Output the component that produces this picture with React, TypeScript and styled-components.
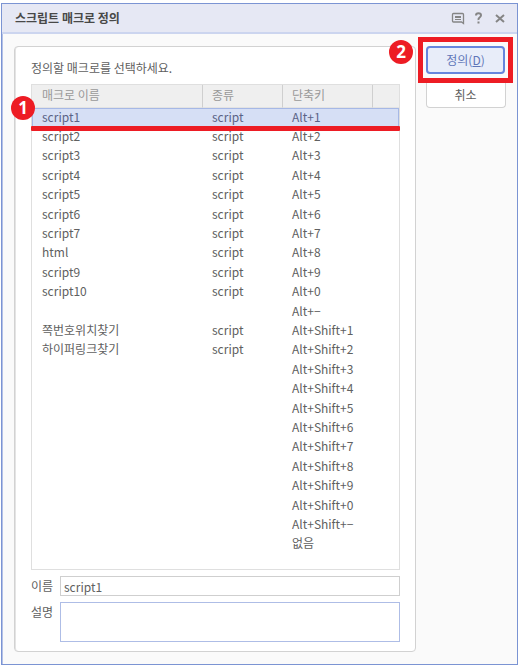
import React from 'react';
import styled, { createGlobalStyle, css } from 'styled-components';

const RED = '#ed1c24';

const GlobalStyle = createGlobalStyle`
  *, *::before, *::after { box-sizing: border-box; }
  body {
    margin: 0;
    background: #fff;
    color: #606060;
    font: 12px/18px "Noto Sans CJK KR", "Noto Sans", sans-serif;
  }
  button, input, textarea { font: inherit; color: inherit; }
`;

const Dialog = styled.main`
  margin: 3px 0 2px 1px;
  border: 1px solid #7b94d3;
  box-shadow: inset 1px 0 #b4c1e6;
  background: #fafafa;
`;

const TitleBar = styled.header`
  display: flex;
  align-items: center;
  justify-content: space-between;
  height: 30px;
  padding: 0 10px 0 13px;
  background: #e6e8f4;
  border-bottom: 2px solid #ccd5ef;
`;

const Title = styled.h1`
  margin: 0;
  color: #484848;
  font-size: 12px;
  line-height: 18px;
  font-weight: 700;
`;

const TitleActions = styled.div`
  display: flex;
  gap: 7px;
`;

const IconButton = styled.button`
  display: flex;
  width: 14px;
  height: 14px;
  padding: 0;
  border: 0;
  background: none;
  color: #858585;
`;

const Body = styled.div`
  display: flex;
  align-items: flex-start;
  gap: 2px;
  padding: 12px 4px 12px 12px;
`;

const Panel = styled.section`
  position: relative;
  flex: 1;
  min-width: 0;
  padding: 12px 15px 9px 16px;
  border: 1px solid #d2d2d2;
  border-radius: 4px;
  background: #fff;
  box-shadow: inset 1px 0 #e4e4e4;
`;

const Prompt = styled.p`
  margin: 0 0 7px;
`;

const ListBox = styled.div`
  position: relative;
  margin-bottom: 6px;
  padding-bottom: 15px;
  border: 1px solid #dfdfdf;
`;

const MacroTable = styled.table`
  width: 100%;
  height: 469px;
  table-layout: fixed;
  border-collapse: separate;
  border-spacing: 0;
`;

const Column = styled.col<{ $width?: number }>`
  ${({ $width }) => $width && css`width: ${$width}px;`}
`;

const HeadCell = styled.th`
  height: 23px;
  padding: 0 9px 2px;
  border-right: 1px solid #cfcfcf;
  border-bottom: 1px solid #e3e3e3;
  background: #efefef;
  color: #999;
  font-weight: 400;
  text-align: left;
  &:first-child { padding-left: 10px; }
  &:last-child { border-right: 0; }
`;

const Cell = styled.td`
  height: 19px;
  padding: 0 9px 2px;
  line-height: 16px;
  white-space: nowrap;
  &:first-child { padding-left: 10px; }
`;

const Row = styled.tr<{ $selected?: boolean }>`
  ${({ $selected }) => $selected && css`
    color: #5a6387;
    ${Cell} {
      background: #d6dff5;
      border-top: 1px solid #a6b8e6;
    }
    ${Cell}:first-child { border-left: 1px solid #a6b8e6; padding-left: 9px; }
    ${Cell}:last-child { border-right: 1px solid #a6b8e6; }
  `}
`;

const Underline = styled.div`
  position: absolute;
  top: 41px;
  left: -1px;
  right: -1px;
  height: 5px;
  border-radius: 1px;
  background: ${RED};
`;

const Badge = styled.span<{ $corner: 'list' | 'panel' }>`
  position: absolute;
  display: flex;
  align-items: center;
  justify-content: center;
  width: 24px;
  height: 24px;
  border-radius: 50%;
  background: ${RED};
  color: #fff;
  font: 700 17px/24px "Open Sans", "Noto Sans", sans-serif;
  ${({ $corner }) => $corner === 'list'
    ? css`top: 11px; left: -21px;`
    : css`top: -7px; right: 2px;`}
`;

const Field = styled.div`
  display: flex;
  align-items: flex-start;
  & + & { margin-top: 6px; }
`;

const Label = styled.label`
  flex: 0 0 29px;
  line-height: 20px;
`;

const TextInput = styled.input`
  flex: 1;
  min-width: 0;
  height: 20px;
  padding: 0 3px;
  border: 1px solid #cfcfcf;
  background: #fff;
`;

const TextArea = styled.textarea`
  flex: 1;
  min-width: 0;
  height: 40px;
  padding: 2px 3px;
  border: 1px solid #aebde6;
  background: #fff;
  resize: none;
  outline: 0;
`;

const Actions = styled.aside`
  display: flex;
  flex-direction: column;
  align-items: center;
  width: 95px;
  margin-top: -9px;
`;

const Highlight = styled.div`
  width: 100%;
  padding: 4px 3px;
  border: 5px solid ${RED};
`;

const ActionButton = styled.button<{ $primary?: boolean }>`
  display: block;
  width: 80px;
  height: 28px;
  padding: 0;
  border: 1px solid #d2d2d2;
  border-radius: 4px;
  background: #fff;
  ${({ $primary }) => $primary
    ? css`
      width: 100%;
      border: 2px solid #6685dc;
      background: #e8edf9;
      color: #6076b8;
    `
    : css`
      height: 25px;
      border-top: 0;
      border-radius: 0 0 4px 4px;
    `}
`;

const columns = ['매크로 이름', '종류', '단축키', ''];

const names = [
  'script1', 'script2', 'script3', 'script4', 'script5', 'script6',
  'script7', 'html', 'script9', 'script10', '', '쪽번호위치찾기', '하이퍼링크찾기',
];

const keys = ['1', '2', '3', '4', '5', '6', '7', '8', '9', '0', '−'];

const shortcuts = [
  ...keys.map((key) => `Alt+${key}`),
  ...keys.map((key) => `Alt+Shift+${key}`),
  '없음',
];

function CommentIcon() {
  return (
    <svg width="14" height="14" viewBox="0 0 14 14" fill="none" stroke="currentColor" aria-hidden="true">
      <path d="M2.5 2.5h9q1 0 1 1v9l-2-1.500h-8q-1 0-1-1v-6.500q0-1 1-1z" strokeWidth="1.300" />
      <path d="M4 5.500h6M4 6.500h6M4 8.500h6" />
    </svg>
  );
}

function HelpIcon() {
  return (
    <svg width="14" height="14" viewBox="0 0 14 14" fill="none" stroke="currentColor" strokeWidth="2" aria-hidden="true">
      <path d="M4 4.500q0-2.200 2.500-2.200t2.500 2q0 1.200-1.400 2.200T6.500 9" />
      <path d="M6.500 10.500v2" />
    </svg>
  );
}

function CloseIcon() {
  return (
    <svg width="14" height="14" viewBox="0 0 14 14" fill="none" stroke="currentColor" strokeWidth="2" aria-hidden="true">
      <path d="M3 4l8 7M11 4l-8 7" />
    </svg>
  );
}

export default function App() {
  return (
    <>
      <GlobalStyle />
      <Dialog>
        <TitleBar>
          <Title>스크립트 매크로 정의</Title>
          <TitleActions>
            <IconButton type="button" aria-label="의견"><CommentIcon /></IconButton>
            <IconButton type="button" aria-label="도움말"><HelpIcon /></IconButton>
            <IconButton type="button" aria-label="닫기"><CloseIcon /></IconButton>
          </TitleActions>
        </TitleBar>
        <Body>
          <Panel>
            <Prompt>정의할 매크로를 선택하세요.</Prompt>
            <ListBox>
              <MacroTable>
                <colgroup>
                  <Column />
                  <Column $width={80} />
                  <Column $width={90} />
                  <Column $width={26} />
                </colgroup>
                <thead>
                  <Row>
                    {columns.map((column) => <HeadCell key={column}>{column}</HeadCell>)}
                  </Row>
                </thead>
                <tbody>
                  {shortcuts.map((shortcut, index) => (
                    <Row key={shortcut} $selected={index === 0}>
                      <Cell>{names[index]}</Cell>
                      <Cell>{names[index] ? 'script' : ''}</Cell>
                      <Cell>{shortcut}</Cell>
                      <Cell />
                    </Row>
                  ))}
                </tbody>
              </MacroTable>
              <Underline />
              <Badge $corner="list">1</Badge>
            </ListBox>
            <Field>
              <Label htmlFor="macro-name">이름</Label>
              <TextInput id="macro-name" defaultValue="script1" />
            </Field>
            <Field>
              <Label htmlFor="macro-description">설명</Label>
              <TextArea id="macro-description" />
            </Field>
            <Badge $corner="panel">2</Badge>
          </Panel>
          <Actions>
            <Highlight>
              <ActionButton type="button" $primary>정의(<u>D</u>)</ActionButton>
            </Highlight>
            <ActionButton type="button">취소</ActionButton>
          </Actions>
        </Body>
      </Dialog>
    </>
  );
}
